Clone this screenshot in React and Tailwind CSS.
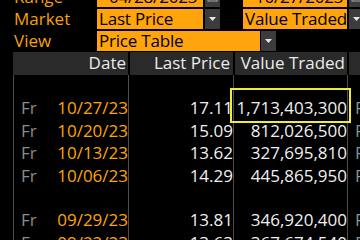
import React from "react";

const rows = [
  null,
  { day: "Fr", date: "10/27/23", price: "17.11", value: "1,713,403,300" },
  { day: "Fr", date: "10/20/23", price: "15.09", value: "812,026,500" },
  { day: "Fr", date: "10/13/23", price: "13.62", value: "327,695,810" },
  { day: "Fr", date: "10/06/23", price: "14.29", value: "445,865,950" },
  null,
  { day: "Fr", date: "09/29/23", price: "13.81", value: "346,920,400" },
  { day: "Fr", date: "09/22/23", price: "13.63", value: "367,674,540" },
];

function Caret() {
  return (
    <svg width="7" height="4" viewBox="0 0 7 4">
      <polygon points="0,0 7,0 3.5,4" fill="#e6e6e6" />
    </svg>
  );
}

function Calendar() {
  return (
    <svg width="11" height="10" viewBox="0 0 11 10">
      <rect x="1" y="1" width="9" height="8" fill="none" stroke="#a8a8a8" strokeWidth="1" />
    </svg>
  );
}

function Btn({ children }) {
  return (
    <div className="ml-[2px] w-[15px] shrink-0 bg-[#3c3c3c] flex items-center justify-center">
      {children}
    </div>
  );
}

function Field({ label, first, firstW, second, icon, pad = "pl-[2px]" }) {
  return (
    <div className="flex h-[20px] leading-[20px]">
      <div className="w-[97px] shrink-0 pl-[14px] text-[#f5a00c]">{label}</div>
      <div className={`shrink-0 bg-[#ffa40c] text-black whitespace-nowrap overflow-hidden tracking-[-0.2px] ${pad}`} style={{ width: firstW }}>
        {first}
      </div>
      <Btn>{icon}</Btn>
      {second && (
        <>
          <div className={`ml-[23px] w-[104px] shrink-0 bg-[#ffa40c] text-black whitespace-nowrap overflow-hidden tracking-[-0.2px] ${pad}`}>
            {second}
          </div>
          <Btn>{icon}</Btn>
        </>
      )}
    </div>
  );
}

export default function App() {
  return (
    <div className="relative w-[360px] h-[240px] overflow-hidden bg-black font-['Open_Sans',sans-serif] text-[17px]">
      {/* Settings */}
      <div className="flex flex-col gap-[2px] mt-[-13px]">
        <Field label="Range" first="04/28/2023" firstW={106} second="10/27/2023" icon={<Calendar />} pad="pl-[12px]" />
        <Field label="Market" first="Last Price" firstW={106} second="Value Traded" icon={<Caret />} />
        <div className="flex h-[20px] leading-[20px]">
          <div className="w-[97px] shrink-0 pl-[14px] text-[#f5a00c]">View</div>
          <div className="w-[163px] shrink-0 bg-[#ffa40c] text-black pl-[2px] tracking-[-0.2px]">Price Table</div>
          <div className="ml-[1px] w-[15px] shrink-0 bg-[#3c3c3c] flex items-center justify-center">
            <Caret />
          </div>
        </div>
      </div>

      {/* Header */}
      <div className="ml-[13px] mt-[1px] grid grid-cols-[115px_105px_114px_1fr] h-[23px] leading-[21px] bg-[#2a2a2a] text-[#ececec]">
        <div className="text-right pr-[2px]">Date</div>
        <div className="text-right pr-[3px] border-l-2 border-black">Last Price</div>
        <div className="text-right pr-[2px] border-l-2 border-black">Value Traded</div>
        <div className="border-l-2 border-black" />
      </div>

      {/* Body */}
      <div className="ml-[13px]">
        {rows.map((r, i) => (
          <div key={i} className="grid grid-cols-[115px_105px_114px_1fr] h-[22.4px] leading-[22.4px]">
            <div className="flex justify-between border-l border-[#4d4d4d] pl-[7px]">
              <span className="text-[#8c8c8c]">{r ? r.day : ""}</span>
              <span className="text-[#ffa500]">{r ? r.date : ""}</span>
            </div>
            <div className="text-right border-l border-[#4d4d4d] text-[#f0f0f0]">{r ? r.price : ""}</div>
            <div className="text-right border-l border-[#4d4d4d] text-[#f0f0f0]">{r ? r.value : ""}</div>
            <div className="border-l border-[#4d4d4d] pl-[7px] text-[#7f9a9a]">{r ? "Fr" : ""}</div>
          </div>
        ))}
      </div>

      {/* Selection cursor */}
      <div className="absolute left-[230px] top-[88px] w-[121px] h-[35px] border-2 border-[#eeee3a]" />
    </div>
  );
}
